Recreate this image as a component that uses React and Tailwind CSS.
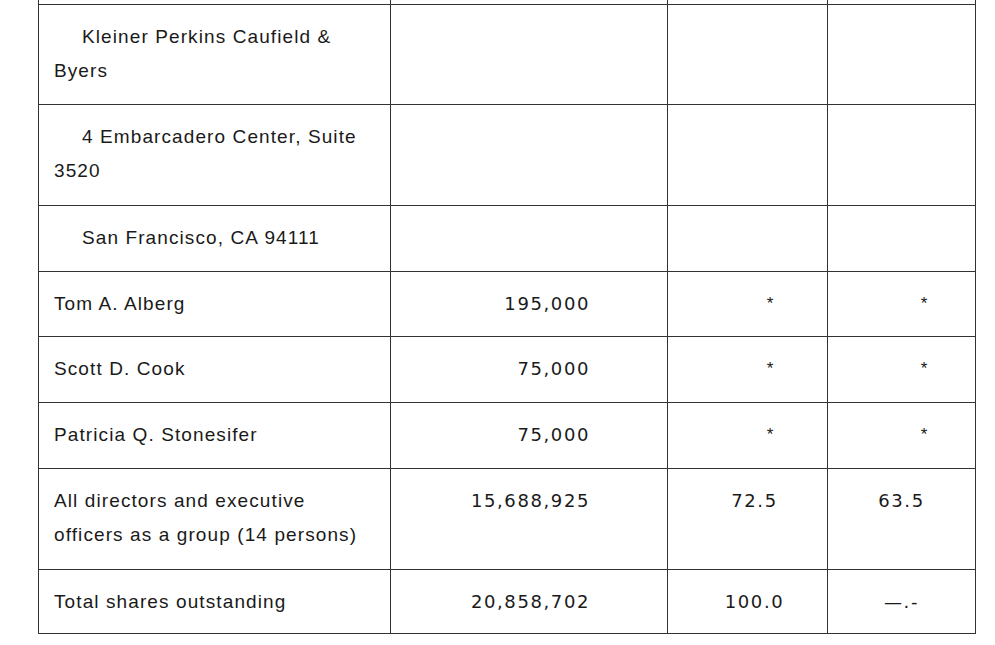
const cols = ["w-[352px] border-r", "w-[277px] border-r", "w-[160px] border-r", "w-[147px]"];

const rows = [
  { h: "h-[100px]", name: "Kleiner Perkins Caufield & Byers", indent: true },
  { h: "h-[101px]", name: "4 Embarcadero Center, Suite 3520", indent: true },
  { h: "h-[66px]", name: "San Francisco, CA 94111", indent: true },
  { h: "h-[65px]", name: "Tom A. Alberg", shares: "195,000", pct: "*", pct2: "*" },
  { h: "h-[66px]", name: "Scott D. Cook", shares: "75,000", pct: "*", pct2: "*" },
  { h: "h-[66px]", name: "Patricia Q. Stonesifer", shares: "75,000", pct: "*", pct2: "*" },
  {
    h: "h-[101px]",
    name: "All directors and executive officers as a group (14 persons)",
    shares: "15,688,925",
    pct: "72.5",
    pct2: "63.5"
  },
  { h: "h-[64px]", name: "Total shares outstanding", shares: "20,858,702", pct: "100.0", pct2: "—.-" }
];

const num = "font-['DejaVu_Sans',sans-serif] text-[18px] tracking-[1.6px]";

function Row({ row }) {
  const star = row.pct === "*";
  return (
    <div className={`flex border-b border-[#333] ${row.h}`}>
      <div className={`${cols[0]} border-[#333] pl-[15px] pr-[16px] pt-[15px]`}>
        <p className={row.indent ? "indent-[28px]" : ""}>{row.name}</p>
      </div>
      <div className={`${cols[1]} border-[#333] pr-[77px] pt-[15px] text-right ${num}`}>{row.shares}</div>
      <div
        className={`${cols[2]} border-[#333] pt-[15px] text-center ${star ? "pl-[46px] text-[17px]" : `pl-[14px] ${num}`}`}
      >
        {row.pct}
      </div>
      <div className={`${cols[3]} pt-[15px] text-center ${star ? "pl-[46px] text-[17px]" : num}`}>
        {row.pct2}
      </div>
    </div>
  );
}

export default function App() {
  return (
    <div className="min-h-[645px] w-[995px] bg-white font-['Liberation_Sans',Arial,sans-serif] text-[19px] leading-[34px] tracking-[1.1px] text-[#1a1a1a]">
      <div className="ml-[38px] w-[938px] border-x border-[#333]">
        <div className="flex h-[5px] border-b border-[#333]">
          {cols.map((c) => (
            <div key={c} className={`${c} border-[#333]`} />
          ))}
        </div>
        {rows.map((row) => (
          <Row key={row.name} row={row} />
        ))}
      </div>
    </div>
  );
}
